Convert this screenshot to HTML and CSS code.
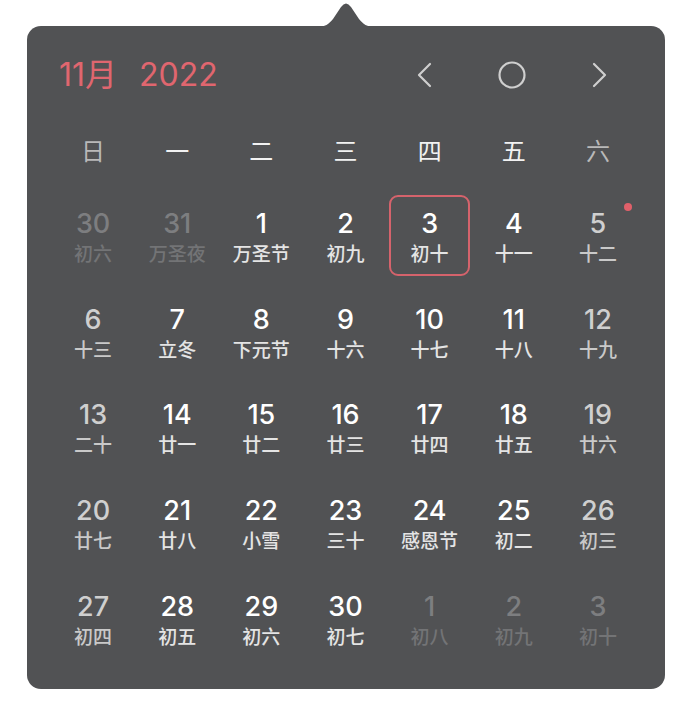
FILE: index.html
```html
<!DOCTYPE html>
<html lang="zh">
<head>
<meta charset="utf-8">
<link rel="stylesheet" href="styles.css">
</head>
<body>
<div class="panel">
  <svg class="notch" width="58" height="27" viewBox="0 0 58 27"><path d="M0,27 C8,27 12,24 16,19 L24,7 Q29,0 34,7 L42,19 C46,24 50,27 58,27 Z" fill="#515254"/></svg>
  <div class="header">
    <div class="title"><span>11月</span><span class="year">2022</span></div>
    <div class="nav">
      <svg class="nav-btn" width="30" height="30" viewBox="0 0 30 30"><polyline points="20,4 9,15 20,26" fill="none" stroke="#cfcfcf" stroke-width="2.2" stroke-linecap="round" stroke-linejoin="round"/></svg>
      <svg class="nav-btn" width="30" height="30" viewBox="0 0 30 30"><circle cx="15" cy="15" r="12.5" fill="none" stroke="#cfcfcf" stroke-width="2.2"/></svg>
      <svg class="nav-btn" width="30" height="30" viewBox="0 0 30 30"><polyline points="10,4 21,15 10,26" fill="none" stroke="#cfcfcf" stroke-width="2.2" stroke-linecap="round" stroke-linejoin="round"/></svg>
    </div>
  </div>
  <div class="weekdays">
    <div class="wd weekend">日</div><div class="wd">一</div><div class="wd">二</div><div class="wd">三</div><div class="wd">四</div><div class="wd">五</div><div class="wd weekend">六</div>
  </div>
  <div class="grid">
    <div class="cell other"><div class="box"><div class="num">30</div><div class="lunar">初六</div></div></div>
    <div class="cell other"><div class="box"><div class="num">31</div><div class="lunar">万圣夜</div></div></div>
    <div class="cell"><div class="box"><div class="num">1</div><div class="lunar">万圣节</div></div></div>
    <div class="cell"><div class="box"><div class="num">2</div><div class="lunar">初九</div></div></div>
    <div class="cell"><div class="box today"><div class="num">3</div><div class="lunar">初十</div></div></div>
    <div class="cell"><div class="box"><div class="num">4</div><div class="lunar">十一</div></div></div>
    <div class="cell weekend"><div class="box"><div class="num">5</div><div class="lunar">十二</div></div><span class="dot"></span></div>

    <div class="cell weekend"><div class="box"><div class="num">6</div><div class="lunar">十三</div></div></div>
    <div class="cell"><div class="box"><div class="num">7</div><div class="lunar">立冬</div></div></div>
    <div class="cell"><div class="box"><div class="num">8</div><div class="lunar">下元节</div></div></div>
    <div class="cell"><div class="box"><div class="num">9</div><div class="lunar">十六</div></div></div>
    <div class="cell"><div class="box"><div class="num">10</div><div class="lunar">十七</div></div></div>
    <div class="cell"><div class="box"><div class="num">11</div><div class="lunar">十八</div></div></div>
    <div class="cell weekend"><div class="box"><div class="num">12</div><div class="lunar">十九</div></div></div>

    <div class="cell weekend"><div class="box"><div class="num">13</div><div class="lunar">二十</div></div></div>
    <div class="cell"><div class="box"><div class="num">14</div><div class="lunar">廿一</div></div></div>
    <div class="cell"><div class="box"><div class="num">15</div><div class="lunar">廿二</div></div></div>
    <div class="cell"><div class="box"><div class="num">16</div><div class="lunar">廿三</div></div></div>
    <div class="cell"><div class="box"><div class="num">17</div><div class="lunar">廿四</div></div></div>
    <div class="cell"><div class="box"><div class="num">18</div><div class="lunar">廿五</div></div></div>
    <div class="cell weekend"><div class="box"><div class="num">19</div><div class="lunar">廿六</div></div></div>

    <div class="cell weekend"><div class="box"><div class="num">20</div><div class="lunar">廿七</div></div></div>
    <div class="cell"><div class="box"><div class="num">21</div><div class="lunar">廿八</div></div></div>
    <div class="cell"><div class="box"><div class="num">22</div><div class="lunar">小雪</div></div></div>
    <div class="cell"><div class="box"><div class="num">23</div><div class="lunar">三十</div></div></div>
    <div class="cell"><div class="box"><div class="num">24</div><div class="lunar">感恩节</div></div></div>
    <div class="cell"><div class="box"><div class="num">25</div><div class="lunar">初二</div></div></div>
    <div class="cell weekend"><div class="box"><div class="num">26</div><div class="lunar">初三</div></div></div>

    <div class="cell weekend"><div class="box"><div class="num">27</div><div class="lunar">初四</div></div></div>
    <div class="cell"><div class="box"><div class="num">28</div><div class="lunar">初五</div></div></div>
    <div class="cell"><div class="box"><div class="num">29</div><div class="lunar">初六</div></div></div>
    <div class="cell"><div class="box"><div class="num">30</div><div class="lunar">初七</div></div></div>
    <div class="cell other"><div class="box"><div class="num">1</div><div class="lunar">初八</div></div></div>
    <div class="cell other"><div class="box"><div class="num">2</div><div class="lunar">初九</div></div></div>
    <div class="cell other"><div class="box"><div class="num">3</div><div class="lunar">初十</div></div></div>
  </div>
</div>
</body>
</html>
```

FILE: styles.css
```css
html, body {
  margin: 0;
  padding: 0;
  background: #ffffff;
}
body {
  font-family: Inter, "Noto Sans CJK SC", sans-serif;
}
.panel {
  position: relative;
  box-sizing: border-box;
  margin: 26px 0 0 27px;
  width: 638px;
  height: 663px;
  background: #515254;
  border-radius: 14px;
  padding: 24px 25px 0 24px;
}
.notch {
  position: absolute;
  left: 290px;
  top: -26px;
  display: block;
}
.header {
  height: 50px;
  display: flex;
  align-items: center;
  justify-content: space-between;
}
.title {
  padding-left: 8px;
  color: #e0666f;
  font-size: 32px;
  line-height: 52px;
  font-weight: 400;
}
.year {
  margin-left: 22px;
}
.nav {
  display: flex;
  align-items: center;
  gap: 57px;
  padding-right: 26px;
}
.nav-btn {
  display: block;
}
.weekdays {
  margin-top: 30px;
  height: 44px;
  display: grid;
  grid-template-columns: repeat(7, 1fr);
}
.wd {
  text-align: center;
  line-height: 44px;
  font-size: 24px;
  font-weight: 400;
  color: #f2f2f2;
}
.wd.weekend {
  color: #b9b9b9;
}
.grid {
  margin-top: 14px;
  display: grid;
  grid-template-columns: repeat(7, 1fr);
  grid-auto-rows: 95.7px;
}
.cell {
  position: relative;
  display: flex;
  flex-direction: column;
  align-items: center;
}
.box {
  box-sizing: border-box;
  width: 81px;
  height: 81px;
  margin-top: 7px;
  padding-top: 14px;
  border-radius: 9px;
  display: flex;
  flex-direction: column;
  align-items: center;
}
.box.today {
  border: 2px solid #d5636c;
  padding-top: 12px;
}
.num {
  font-size: 27px;
  line-height: 30px;
  font-weight: 500;
  color: #ffffff;
}
.lunar {
  margin-top: 6px;
  font-size: 19px;
  line-height: 20px;
  font-weight: 500;
  color: #e4e4e4;
}
.cell.weekend .num {
  color: #cfcfcf;
}
.cell.weekend .lunar {
  color: #c9c9c9;
}
.cell.other .num {
  color: #7d7e80;
}
.cell.other .lunar {
  color: #737476;
}
.dot {
  position: absolute;
  top: 15px;
  right: 8px;
  width: 8px;
  height: 8px;
  border-radius: 50%;
  background: #e0606a;
}
```
